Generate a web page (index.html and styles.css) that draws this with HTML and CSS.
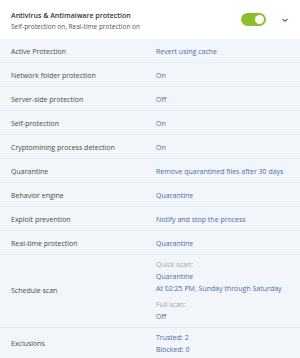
FILE: index.html
```html
<!DOCTYPE html>
<html>
<head>
  <title>Antivirus & Antimalware protection</title>
  <link rel="stylesheet" href="styles.css">
</head>
<body>
  <div id="panel">
    <div class="header">
      <div class="titles">
        <div class="title">Antivirus &amp; Antimalware protection</div>
        <div class="subtitle">Self-protection on, Real-time protection on</div>
      </div>
      <div class="toggle"><div class="knob"></div></div>
      <svg class="chevron" width="8" height="6" viewBox="0 0 8 6">
        <path d="M1.5 2 L4 4.3 L6.5 2" fill="none" stroke="#4a6fa8" stroke-width="1.2"/>
      </svg>
    </div>

    <div class="row"><div class="label">Active Protection</div><div class="value">Revert using cache</div></div>
    <div class="row"><div class="label">Network folder protection</div><div class="value">On</div></div>
    <div class="row"><div class="label">Server-side protection</div><div class="value">Off</div></div>
    <div class="row"><div class="label">Self-protection</div><div class="value">On</div></div>
    <div class="row"><div class="label">Cryptomining process detection</div><div class="value">On</div></div>
    <div class="row"><div class="label">Quarantine</div><div class="value">Remove quarantined files after 30 days</div></div>
    <div class="row"><div class="label">Behavior engine</div><div class="value">Quarantine</div></div>
    <div class="row"><div class="label">Exploit prevention</div><div class="value">Notify and stop the process</div></div>
    <div class="row"><div class="label">Real-time protection</div><div class="value">Quarantine</div></div>

    <div class="row tall">
      <div class="label">Schedule scan</div>
      <div class="value stack">
        <div class="muted">Quick scan:</div>
        <div>Quarantine</div>
        <div>At 02:25 PM, Sunday through Saturday</div>
        <div class="muted gap">Full scan:</div>
        <div>Off</div>
      </div>
    </div>

    <div class="row tall">
      <div class="label">Exclusions</div>
      <div class="value stack">
        <div>Trusted: 2</div>
        <div>Blocked: 0</div>
      </div>
    </div>
  </div>
</body>
</html>
```

FILE: styles.css
```css
*{
  padding: 0;
  margin: 0;
  box-sizing: border-box;
}

body{
  background-color: #fff;
  font-family: "Open Sans", "Noto Sans", sans-serif;
  font-size: 7px;
  color: #4a4a4a;
}

#panel{
  width: 300px;
}

.header{
  display: flex;
  align-items: center;
  height: 39px;
  padding-left: 11px;
  padding-top: 3px;
  background-color: #fff;
}

.titles{
  flex: 1;
}

.title{
  font-size: 7px;
  font-weight: 600;
  color: #333;
  line-height: 11px;
}

.subtitle{
  font-size: 6.5px;
  color: #555;
  line-height: 10px;
  margin-top: 1px;
}

.toggle{
  width: 25px;
  height: 13px;
  border-radius: 7px;
  background-color: #8cbf2a;
  display: flex;
  justify-content: flex-end;
  align-items: center;
  padding-right: 2px;
  margin-top: -3px;
}

.knob{
  width: 9px;
  height: 9px;
  border-radius: 50%;
  background-color: #fff;
}

.chevron{
  margin-left: 15px;
  margin-right: 11px;
  margin-top: -2px;
}

.row{
  display: flex;
  align-items: center;
  height: 24px;
  background-color: #f2f6fb;
  border-bottom: 1px solid #e4eaf2;
  padding-left: 11px;
  padding-top: 1px;
}

.label{
  width: 145px;
}

.value{
  color: #4a6aa6;
}

.tall{
  height: auto;
  padding-top: 4px;
  padding-bottom: 4px;
}

.stack div{
  line-height: 12px;
}

.muted{
  color: #a0a4aa;
}

.stack .gap{
  margin-top: 3.5px;
}
```
